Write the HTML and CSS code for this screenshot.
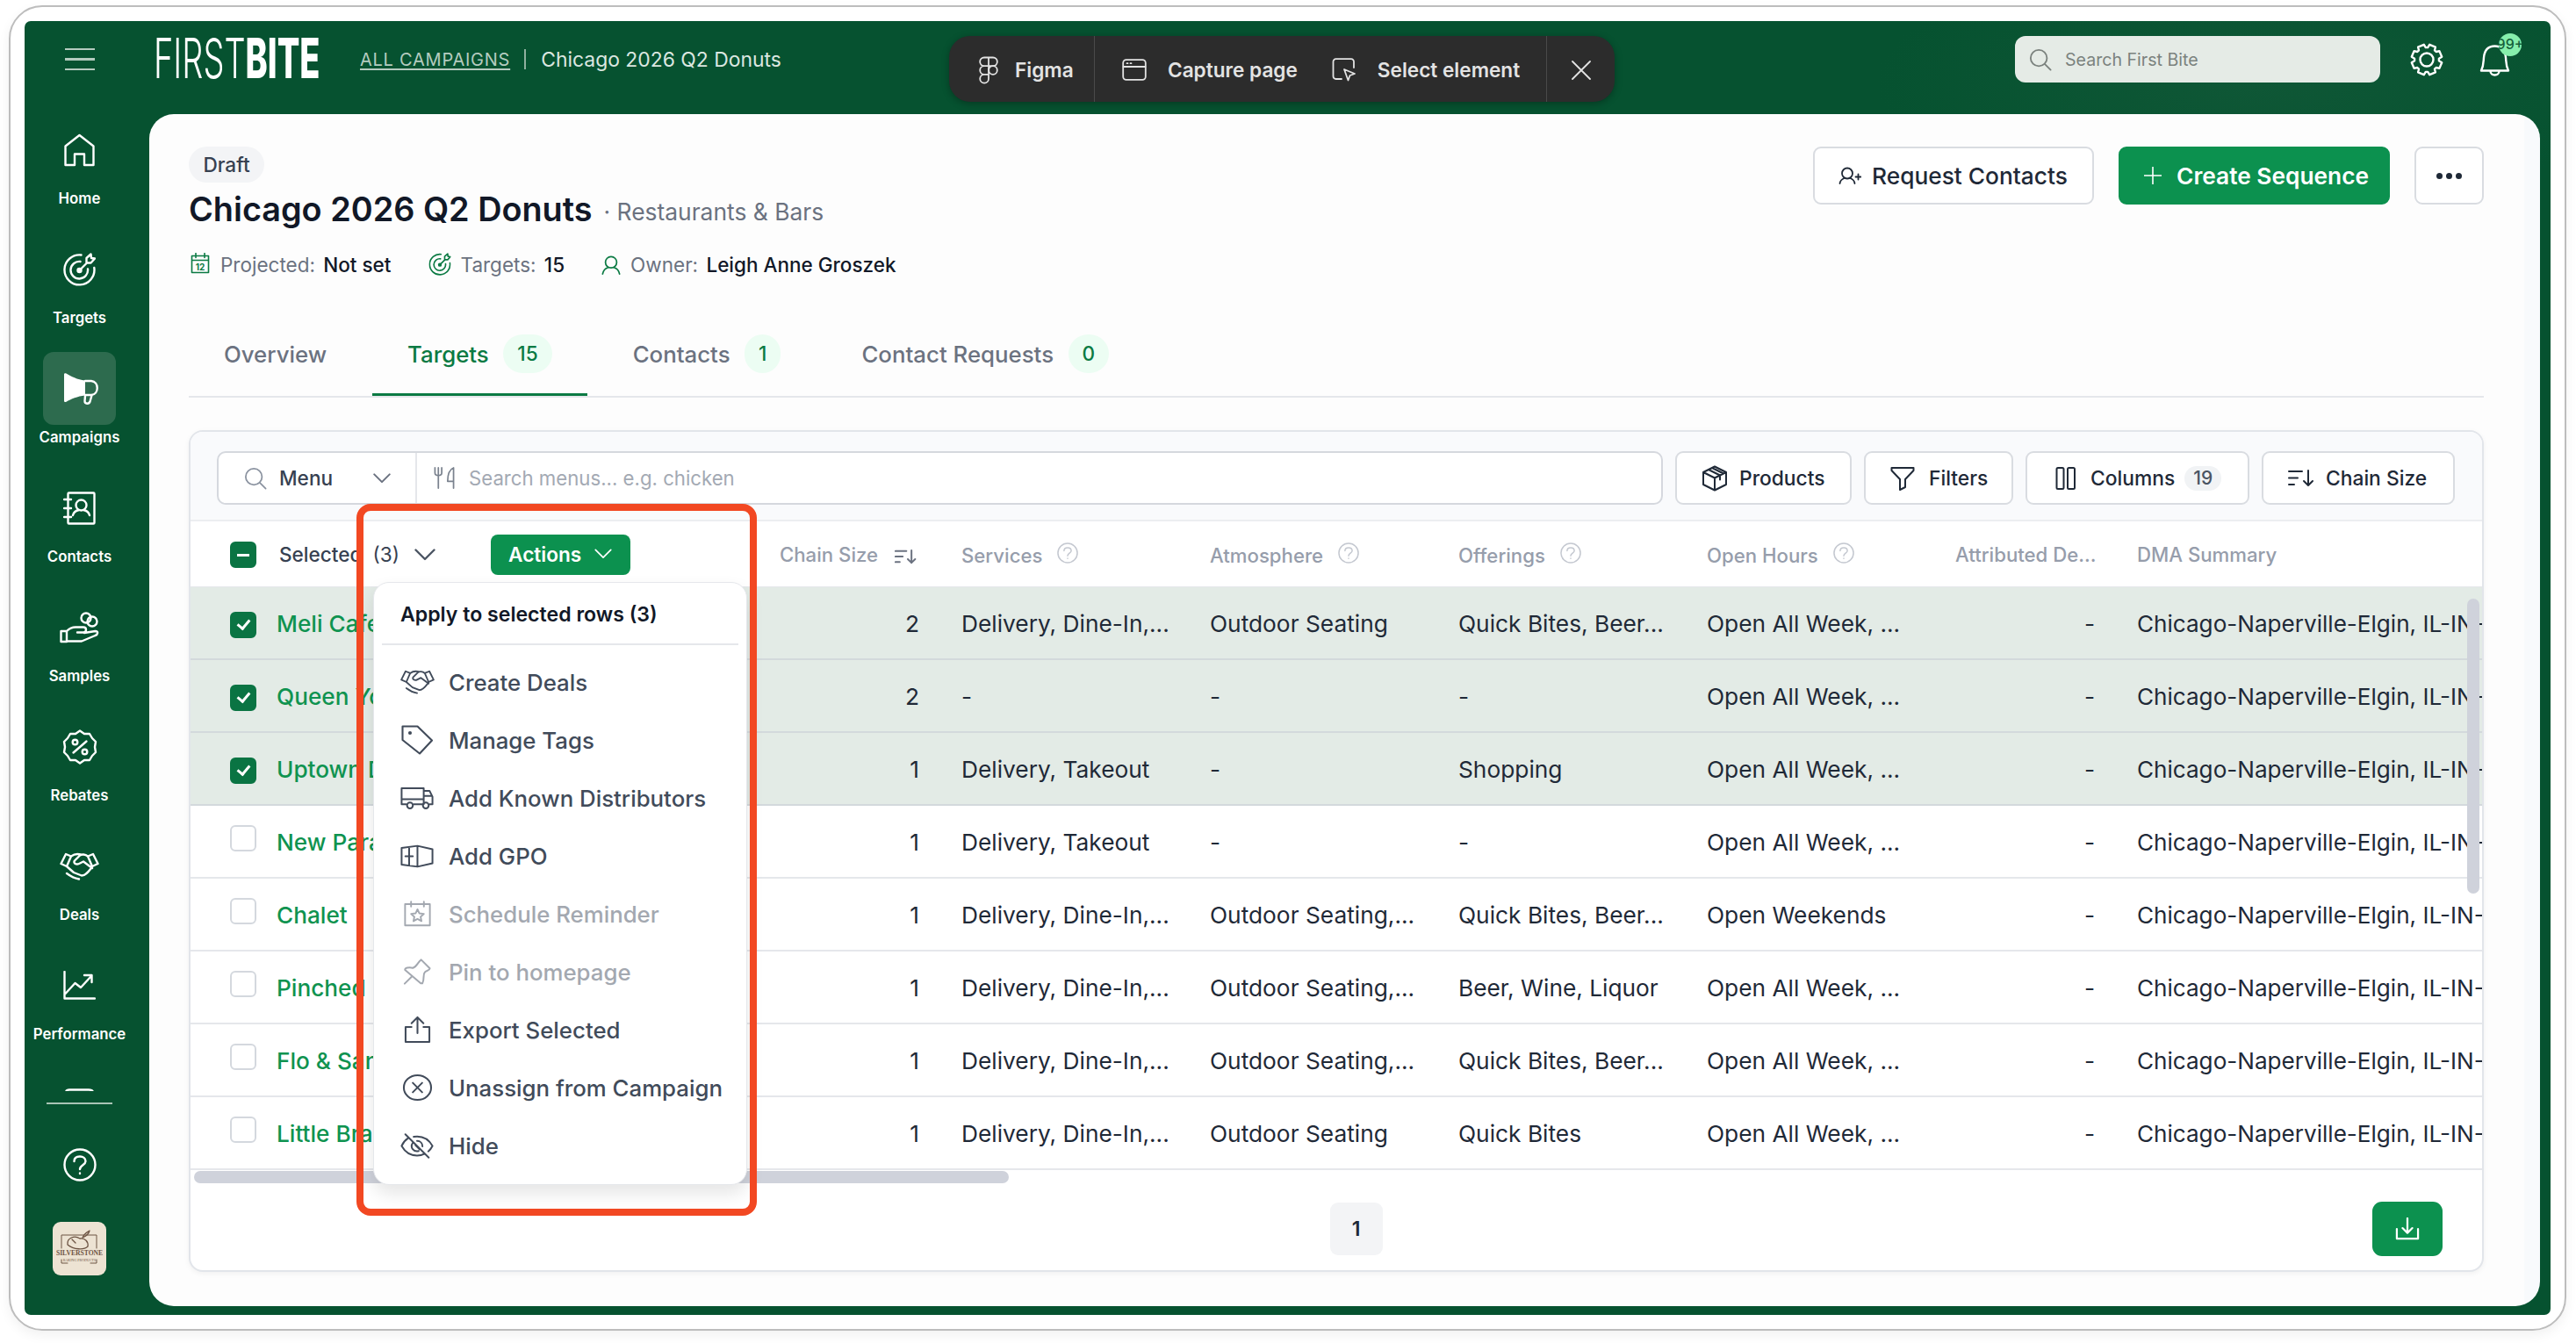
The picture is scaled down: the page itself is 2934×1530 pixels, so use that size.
FILE: index.html
```html
<!DOCTYPE html>
<html lang="en">
<head>
    <meta charset="UTF-8">
    <meta name="viewport" content="width=device-width, initial-scale=1.0">
    <title>Chicago 2026 Q2 Donuts - First Bite</title>
    <link rel="stylesheet" href="styles.css">
</head>
<body>
    <!-- Icon sprite -->
    <svg class="sprite" aria-hidden="true">
        <symbol id="i-home" viewBox="0 0 37 38"><path d="M2.5 14.5 18.5 2l16 12.5V36H24V23.500H13V36H2.500z"/></symbol>
        <symbol id="i-target" viewBox="0 0 37 38"><path d="M20.500 2.500A17 17 0 1 0 35.300 17M19.500 10A9.800 9.800 0 1 0 28 18.500M18.500 20l8.500-8.500M26.500 11.500V6l5-4.500.5 4.500 4 .5-4.500 5z"/><circle cx="18.500" cy="20" r="2" fill="currentColor"/></symbol>
        <symbol id="i-megaphone" viewBox="0 0 41 38"><path d="M1 2.500C1 1.200 2.300.8 3.500 1.400 9 4.500 16 8.500 25 9.500v17C16 27.500 9 30.500 3.500 33.800 2.300 34.500 1 34 1 32.500z" fill="currentColor" stroke="none"/><path d="M25 10h7c9 1 9 15 0 16h-7M25 27l-.5 6c0 3.500 5 3.500 6 .5l2-7"/></symbol>
        <symbol id="i-contacts" viewBox="0 0 37 38"><rect x="5.500" y="1.500" width="30" height="35" rx="1"/><path d="M1 9h8M1 19h8M1 29h8M11 27c1-4 4-5.500 7-6M30 27c-1-4-4-5.500-7-6"/><circle cx="20.500" cy="15.500" r="6"/></symbol>
        <symbol id="i-samples" viewBox="0 0 45 36"><circle cx="30" cy="7" r="5.500"/><circle cx="37" cy="11" r="5.500"/><path d="M1.500 22H8v12H1.500zM8 22c3-3 6-4.500 10-4.500h9c4 0 4 6 0 6h-7M28 24l12.500-2c4 0 3 4 0 5L25 33.500H8"/></symbol>
        <symbol id="i-rebates" viewBox="0 0 40 40"><path d="M20 1.500 25 5l6 0 3 5 4 4-1 6 1 6-4 4-3 5-6 0-5 3.500-5-3.500-6 0-3-5-4-4 1-6-1-6 4-4 3-5 6 0zM12.500 26.500l15-13"/><circle cx="14.500" cy="14.500" r="2.800"/><circle cx="25.500" cy="25.500" r="2.800"/></symbol>
        <symbol id="i-handshake" viewBox="0 0 45 32"><path d="M1.500 13 7 2l6 2.500L8 16zM43.500 13 38 2l-6 2.500L37 16zM13 4.500C17 1.500 20 1.500 24 2.500M32 4.500C29 2 25 2 23 3.500l-6 6c-2 3 2 5 5 3.500l5-2.500L37 18M8 16l8 7 9 3.500c5 0 8-5 12-10M8 24c4 3 8 5.500 14 6.500"/></symbol>
        <symbol id="i-chart" viewBox="0 0 37 34"><path d="M1.500 1v30.500H36M2.500 26l11-12 6.500 5L32 6M24 5h8.500v8"/></symbol>
        <symbol id="i-box" viewBox="0 0 37 38"><path d="M3 36V5c0-2.500 2-3.500 4-3.500h22c3 0 5 1 5 3.500v31z"/></symbol>
        <symbol id="i-help" viewBox="0 0 38 38"><circle cx="19" cy="19" r="17.500"/><path d="M12.500 15c0-4 3-5.500 6.500-5.500s6.500 2 6.500 5.500c0 4-6.500 4.500-6.500 9M19 28.500v.5"/></symbol>
        <symbol id="i-search" viewBox="0 0 28 28"><circle cx="12" cy="12" r="10"/><path d="m19.500 19.500 7 7"/></symbol>
        <symbol id="i-gear" viewBox="0 0 38 38"><path d="M32.900 20.200 36.200 22.200 33.400 28.900 29.700 28 28 29.700 28.900 33.400 22.200 36.200 20.200 32.900 17.800 32.900 15.800 36.200 9.100 33.400 10 29.700 8.300 28 4.600 28.900 1.800 22.200 5.100 20.200 5.100 17.800 1.800 15.800 4.600 9.100 8.300 10 10 8.300 9.100 4.600 15.800 1.800 17.800 5.100 20.200 5.100 22.200 1.800 28.900 4.600 28 8.300 29.700 10 33.400 9.100 36.200 15.800 32.900 17.800z"/><circle cx="19" cy="19" r="7.500"/></symbol>
        <symbol id="i-bell" viewBox="0 0 36 38"><path d="M2 31.500c3-6 2.500-10 3-15C5.800 8 10.500 3.500 17.500 3.500S29.200 8 30 16.500c.5 5 0 9 3 15zM12.500 32c0 6 10 6 10 0"/></symbol>
        <symbol id="i-chevron" viewBox="0 0 24 14"><path d="m1.500 1.500 10.500 10.500 10.500-10.500"/></symbol>
        <symbol id="i-cutlery" viewBox="0 0 26 26"><path d="M2 1v6c0 4 8 4 8 0V1M6 1v24M24 25V1c-5 2-7 9-7 16h7"/></symbol>
        <symbol id="i-cube" viewBox="0 0 30 30"><path d="M15 1.500 28 8v14l-13 6.500L2 22V8zM2 8l13 6.500L28 8M15 14.500v14M8 5l13 6.500v5M12 3l13 6.500"/></symbol>
        <symbol id="i-funnel" viewBox="0 0 28 28"><path d="M1.500 2h25v3L17 15v9l-6 3V15L1.500 5z"/></symbol>
        <symbol id="i-columns" viewBox="0 0 24 28"><rect x="1.500" y="2" width="8" height="24" rx="1.500"/><rect x="14" y="2" width="8" height="24" rx="1.500"/></symbol>
        <symbol id="i-sort" viewBox="0 0 30 20"><path d="M1 2h15M1 9.500h10M1 17h6M23 1v17M18 13l5 5 5-5"/></symbol>
        <symbol id="i-calendar" viewBox="0 0 22 24"><path d="M1.500 3.500h19v19h-19zM1.500 8.500h19M6 .5v5M16 .5v5"/></symbol>
        <symbol id="i-user" viewBox="0 0 24 24"><circle cx="12" cy="8.500" r="7"/><path d="M1.500 23c1-5 3.500-7 7-8M22.500 23c-1-5-3.500-7-7-8"/></symbol>
        <symbol id="i-user-plus" viewBox="0 0 26 20"><circle cx="10" cy="7.500" r="6"/><path d="M1.500 19c.5-3.500 2.500-5 5-6M18.500 19c-.5-3.500-2.500-5-5-6M22.500 8.500v6M19.500 11.500h6"/></symbol>
        <symbol id="i-plus" viewBox="0 0 20 20"><path d="M10 .5v19M.5 10h19"/></symbol>
        <symbol id="i-tag" viewBox="0 0 36 34"><path d="M1.500 1.500h17L35 17.500 21 32.500 1.500 17z"/><circle cx="10" cy="9" r="1"/></symbol>
        <symbol id="i-truck" viewBox="0 0 40 28"><path d="M7 21H1.500V2H28v19H16M28 5h7l3.500 7v9H35M28 21h-2M1.500 15H28M28 11h10"/><circle cx="11.500" cy="22.500" r="3.500"/><circle cx="30.500" cy="22.500" r="3.500"/></symbol>
        <symbol id="i-gpo" viewBox="0 0 40 28"><path d="M1.500 4 20.500 1.500 38.500 5.500v17L20.500 26.500 1.500 24zM20.500 1.500v25M10.500 3v22M6 14h9"/></symbol>
        <symbol id="i-reminder" viewBox="0 0 34 32"><path d="M1.500 4h31v26.500h-31zM9 1v6M25 1v6M17 10.500l2.400 5 5.600.6-4.100 3.700 1.100 5.400-5-2.700-5 2.700 1.100-5.400L9 16.100l5.600-.6z"/></symbol>
        <symbol id="i-pin" viewBox="0 0 34 32"><path d="M22 1.500 32.500 12c0 2-3 2.500-6 4.500-3 3 0 8-3 13.500h-2L2.500 14c-1-2.500 5-4 9.500-2.500C17 10 18 4 22 1.500zM11 21.500l-9 9"/></symbol>
        <symbol id="i-export" viewBox="0 0 32 32"><path d="M9 13H2v17.500h28V13h-7M16 20V2M9 8.500 16 1.500l7 7"/></symbol>
        <symbol id="i-unassign" viewBox="0 0 36 32"><ellipse cx="18" cy="16" rx="16" ry="14.500"/><path d="m12.500 10.500 11 11M23.500 10.500l-11 11"/></symbol>
        <symbol id="i-hide" viewBox="0 0 40 30"><path d="M9 6C6 8 3 11.500 1.500 15 6 23 12 26.500 20 26.500c3 0 6-.5 8.500-2M16 4c10-1.500 18 3 22.500 11-1.500 3-3 5-5 6.500M6 1l28 28M15 11c-4 6 1 11.500 7 10M20 9c4 0 6.500 3 6.500 6.500M18 14l5 5"/></symbol>
        <symbol id="i-download" viewBox="0 0 30 28"><path d="M2 14v12h26V14M15 1v17M9 13l6 6 6-6"/></symbol>
        <symbol id="i-figma" viewBox="0 0 22 32"><path d="M11 1.500H6a4.800 4.800 0 0 0 0 9.700h5zM11 1.500h5a4.800 4.800 0 0 1 0 9.700h-5zM11 11.200H6a4.800 4.800 0 0 0 0 9.600h5zM11 20.800H6a4.900 4.900 0 1 0 5 4.900z"/><circle cx="16" cy="16" r="4.800"/></symbol>
        <symbol id="i-window" viewBox="0 0 28 25"><rect x="1.200" y="1.200" width="25.600" height="22.600" rx="3.500"/><path d="M1.500 9h25M5.500 5.200h1M9.500 5.200h1"/></symbol>
        <symbol id="i-select" viewBox="0 0 28 27"><path d="M11 24H4.500a3 3 0 0 1-3-3V4.200a3 3 0 0 1 3-3H22a3 3 0 0 1 3 3V11M14 13l12 5-5.500 2-2 5.500z"/></symbol>
        <symbol id="i-close" viewBox="0 0 22 22"><path d="m1 1 20 20M21 1 1 21"/></symbol>
    </svg>

    <div class="frame">
        <div class="app">
            <header class="topbar">
                <div class="hamburger"><span></span><span></span><span></span></div>
                <div class="logo"><span class="logo-text">FIRST<b>BITE</b></span></div>
                <nav class="crumbs">
                    <a>ALL CAMPAIGNS</a>
                    <i></i>
                    <span>Chicago 2026 Q2 Donuts</span>
                </nav>
                <div class="top-search"><svg><use href="#i-search"/></svg>Search First Bite</div>
                <svg class="gear"><use href="#i-gear"/></svg>
                <div class="bell">
                    <svg><use href="#i-bell"/></svg>
                    <span class="bell-badge">99+</span>
                </div>
                <div class="capture-bar">
                    <div class="capture-brand"><svg><use href="#i-figma"/></svg>Figma</div>
                    <div class="capture-tools">
                        <svg><use href="#i-window"/></svg><span class="capture-page">Capture page</span>
                        <svg><use href="#i-select"/></svg><span>Select element</span>
                    </div>
                    <div class="capture-close"><svg><use href="#i-close"/></svg></div>
                </div>
            </header>

            <aside class="sidebar">
                <nav class="nav">
                    <a class="nav-item"><span class="nav-icon"><svg width="37" height="38"><use href="#i-home"/></svg></span>Home</a>
                    <a class="nav-item"><span class="nav-icon"><svg width="37" height="38"><use href="#i-target"/></svg></span>Targets</a>
                    <a class="nav-item active"><span class="nav-icon"><svg width="41" height="38"><use href="#i-megaphone"/></svg></span>Campaigns</a>
                    <a class="nav-item"><span class="nav-icon"><svg width="37" height="38"><use href="#i-contacts"/></svg></span>Contacts</a>
                    <a class="nav-item"><span class="nav-icon"><svg width="45" height="36"><use href="#i-samples"/></svg></span>Samples</a>
                    <a class="nav-item"><span class="nav-icon"><svg width="40" height="40"><use href="#i-rebates"/></svg></span>Rebates</a>
                    <a class="nav-item"><span class="nav-icon"><svg width="45" height="32"><use href="#i-handshake"/></svg></span>Deals</a>
                    <a class="nav-item"><span class="nav-icon"><svg width="37" height="34"><use href="#i-chart"/></svg></span>Performance</a>
                    <a class="nav-item"><span class="nav-icon"><svg width="37" height="38"><use href="#i-box"/></svg></span></a>
                </nav>
                <hr>
                <svg class="nav-help"><use href="#i-help"/></svg>
                <div class="company">
                    <svg viewBox="0 0 61 61">
                        <path d="M10 30V15h40v15M10 43v4h7M50 43v4h-7" stroke-width="1"/>
                        <path d="M17 26c-1-8 8-11 14-7 6-1 10 4 9 9-4 4-16 4-23-2zM22 20l4 4M34 18c2-5 5-6 8-8-1 4-3 6-8 8" stroke-width="1.300"/>
                    </svg>
                    <span class="company-name">SILVERSTONE</span>
                    <span class="company-sub">BAKING PRODUCTS</span>
                </div>
            </aside>

            <main class="panel">
                <div class="page-head">
                    <div>
                        <span class="pill">Draft</span>
                        <h1>Chicago 2026 Q2 Donuts<small>· Restaurants &amp; Bars</small></h1>
                        <div class="meta">
                            <svg class="calendar" viewBox="0 0 22 24"><use href="#i-calendar"/><text x="11" y="19.500">12</text></svg><span>Projected: <b>Not set</b></span>
                            <svg class="goal" viewBox="0 0 37 38"><use href="#i-target"/></svg><span>Targets: <b>15</b></span>
                            <svg class="owner" viewBox="0 0 24 24"><use href="#i-user"/></svg><span>Owner: <b>Leigh Anne Groszek</b></span>
                        </div>
                    </div>
                    <div class="head-actions">
                        <button class="btn request"><svg><use href="#i-user-plus"/></svg>Request Contacts</button>
                        <button class="btn create"><svg><use href="#i-plus"/></svg>Create Sequence</button>
                        <button class="btn more"><i></i><i></i><i></i></button>
                    </div>
                </div>

                <div class="tabs">
                    <a>Overview</a>
                    <a class="active">Targets <span>15</span></a>
                    <a>Contacts <span>1</span></a>
                    <a>Contact Requests <span>0</span></a>
                </div>

                <section class="card">
                    <div class="toolbar">
                        <div class="menu-search">
                            <div class="scope"><svg class="lens"><use href="#i-search"/></svg>Menu<svg class="chev"><use href="#i-chevron"/></svg></div>
                            <div class="query"><svg><use href="#i-cutlery"/></svg>Search menus... e.g. chicken</div>
                        </div>
                        <button class="tool products"><svg width="30" height="30"><use href="#i-cube"/></svg>Products</button>
                        <button class="tool filters"><svg width="28" height="28"><use href="#i-funnel"/></svg>Filters</button>
                        <button class="tool columns"><svg width="24" height="28"><use href="#i-columns"/></svg>Columns<span>19</span></button>
                        <button class="tool sort"><svg width="30" height="20"><use href="#i-sort"/></svg>Chain Size</button>
                    </div>

                    <div class="table-wrap">
                        <table>
                            <colgroup>
                                <col class="c-name"><col class="c-size"><col class="c-text"><col class="c-text"><col class="c-text"><col class="c-text"><col class="c-deals"><col class="c-dma">
                            </colgroup>
                            <thead>
                                <tr>
                                    <th>
                                        <div class="select-head">
                                            <span class="check some"></span>
                                            <b>Selected</b><span class="count">(3)</span>
                                            <svg><use href="#i-chevron"/></svg>
                                            <button class="actions-btn">Actions<svg><use href="#i-chevron"/></svg></button>
                                        </div>
                                    </th>
                                    <th>Chain Size<svg class="sort-icon"><use href="#i-sort"/></svg></th>
                                    <th>Services<svg class="hint" viewBox="0 0 38 38"><use href="#i-help"/></svg></th>
                                    <th>Atmosphere<svg class="hint" viewBox="0 0 38 38"><use href="#i-help"/></svg></th>
                                    <th>Offerings<svg class="hint" viewBox="0 0 38 38"><use href="#i-help"/></svg></th>
                                    <th>Open Hours<svg class="hint" viewBox="0 0 38 38"><use href="#i-help"/></svg></th>
                                    <th class="num">Attributed De...</th>
                                    <th>DMA Summary</th>
                                </tr>
                            </thead>
                            <tbody>
                                <tr class="selected"><td><span class="check on"></span><a>Meli Cafe</a></td><td class="num">2</td><td>Delivery, Dine-In,...</td><td>Outdoor Seating</td><td>Quick Bites, Beer...</td><td>Open All Week, ...</td><td class="num">-</td><td>Chicago-Naperville-Elgin, IL-IN-</td></tr>
                                <tr class="selected"><td><span class="check on"></span><a>Queen Yo</a></td><td class="num">2</td><td>-</td><td>-</td><td>-</td><td>Open All Week, ...</td><td class="num">-</td><td>Chicago-Naperville-Elgin, IL-IN-</td></tr>
                                <tr class="selected"><td><span class="check on"></span><a>Uptown D</a></td><td class="num">1</td><td>Delivery, Takeout</td><td>-</td><td>Shopping</td><td>Open All Week, ...</td><td class="num">-</td><td>Chicago-Naperville-Elgin, IL-IN-</td></tr>
                                <tr><td><span class="check"></span><a>New Para</a></td><td class="num">1</td><td>Delivery, Takeout</td><td>-</td><td>-</td><td>Open All Week, ...</td><td class="num">-</td><td>Chicago-Naperville-Elgin, IL-IN-</td></tr>
                                <tr><td><span class="check"></span><a>Chalet</a></td><td class="num">1</td><td>Delivery, Dine-In,...</td><td>Outdoor Seating,...</td><td>Quick Bites, Beer...</td><td>Open Weekends</td><td class="num">-</td><td>Chicago-Naperville-Elgin, IL-IN-</td></tr>
                                <tr><td><span class="check"></span><a>Pinched</a></td><td class="num">1</td><td>Delivery, Dine-In,...</td><td>Outdoor Seating,...</td><td>Beer, Wine, Liquor</td><td>Open All Week, ...</td><td class="num">-</td><td>Chicago-Naperville-Elgin, IL-IN-</td></tr>
                                <tr><td><span class="check"></span><a>Flo &amp; San</a></td><td class="num">1</td><td>Delivery, Dine-In,...</td><td>Outdoor Seating,...</td><td>Quick Bites, Beer...</td><td>Open All Week, ...</td><td class="num">-</td><td>Chicago-Naperville-Elgin, IL-IN-</td></tr>
                                <tr><td><span class="check"></span><a>Little Bra</a></td><td class="num">1</td><td>Delivery, Dine-In,...</td><td>Outdoor Seating</td><td>Quick Bites</td><td>Open All Week, ...</td><td class="num">-</td><td>Chicago-Naperville-Elgin, IL-IN-</td></tr>
                            </tbody>
                        </table>
                        <div class="v-scroll"></div>
                    </div>
                    <div class="h-scroll"></div>

                    <div class="card-foot">
                        <span class="page">1</span>
                        <button class="download"><svg><use href="#i-download"/></svg></button>
                    </div>

                    <!-- Bulk actions menu -->
                    <div class="menu">
                        <h2>Apply to selected rows (3)</h2>
                        <ul>
                            <li><span><svg width="43" height="28"><use href="#i-handshake"/></svg></span>Create Deals</li>
                            <li><span><svg width="36" height="34"><use href="#i-tag"/></svg></span>Manage Tags</li>
                            <li><span><svg width="38" height="27"><use href="#i-truck"/></svg></span>Add Known Distributors</li>
                            <li><span><svg width="38" height="27"><use href="#i-gpo"/></svg></span>Add GPO</li>
                            <li class="disabled"><span><svg width="31" height="32"><use href="#i-reminder"/></svg></span>Schedule Reminder</li>
                            <li class="disabled"><span><svg width="32" height="32"><use href="#i-pin"/></svg></span>Pin to homepage</li>
                            <li><span><svg width="31" height="32"><use href="#i-export"/></svg></span>Export Selected</li>
                            <li><span><svg width="35" height="32"><use href="#i-unassign"/></svg></span>Unassign from Campaign</li>
                            <li><span><svg width="38" height="29"><use href="#i-hide"/></svg></span>Hide</li>
                        </ul>
                    </div>
                    <div class="callout"></div>
                </section>
            </main>
        </div>
    </div>
</body>
</html>
```
FILE: styles.css
```css
* {
    box-sizing: border-box;
}
body {
    margin: 0;
    height: 1530px;
    overflow: hidden;
    background: #fff;
    font-family: Inter, "Liberation Sans", sans-serif;
    color: #1f2937;
}
button {
    font-family: inherit;
}
svg {
    fill: none;
    stroke: currentColor;
    stroke-width: 2.4;
    stroke-linecap: round;
    stroke-linejoin: round;
    flex: none;
}
.sprite {
    display: none;
}
.frame {
    margin: 6px 11px 0 10px;
    height: 1510px;
    padding: 16px;
    border: 2px solid #bdbdbd;
    border-radius: 38px;
    box-shadow: 0 5px 14px rgba(0, 0, 0, 0.06);
}
.app {
    display: grid;
    grid-template-columns: 142px 1fr;
    grid-template-rows: 106px 1358px;
    height: 1474px;
    padding-right: 12px;
    background: radial-gradient(ellipse 430px 150px at 2540px 70px, #0f5736, #065230);
    border-radius: 7px;
}

/* Top bar */
.topbar {
    grid-column: 1 / 3;
    position: relative;
    display: flex;
    align-items: center;
    padding-bottom: 19px;
    color: #fff;
}
.hamburger {
    display: flex;
    flex-direction: column;
    gap: 9px;
    width: 34px;
    margin-left: 46px;
}
.hamburger span {
    height: 2.5px;
    background: #b4cbbf;
}
.logo {
    width: 188px;
    margin: -4px 0 0 67px;
}
.logo-text {
    display: block;
    font-size: 63px;
    line-height: 64px;
    font-weight: 300;
    white-space: nowrap;
    transform: scaleX(0.603);
    transform-origin: left;
}
.logo-text b {
    font-weight: 800;
}
.crumbs {
    display: flex;
    align-items: center;
    margin-left: 47px;
    font-size: 22.9px;
    color: #dbe7e0;
}
.crumbs a {
    font-size: 20px;
    letter-spacing: 0.75px;
    color: #b4cbbf;
    text-decoration: underline;
    text-decoration-thickness: 2px;
    text-underline-offset: 3px;
}
.crumbs i {
    width: 2px;
    height: 23px;
    margin: 0 17px 0 16px;
    background: #8fb09f;
}
.top-search {
    display: flex;
    align-items: center;
    gap: 15px;
    width: 416px;
    height: 53px;
    margin-left: auto;
    padding-left: 16px;
    background: #e5ebe6;
    border-radius: 12px;
    font-size: 19.6px;
    color: #7b827e;
}
.top-search svg {
    width: 26px;
    height: 26px;
    stroke-width: 2;
}
.gear {
    width: 38px;
    height: 38px;
    margin-left: 34px;
}
.bell {
    position: relative;
    width: 36px;
    height: 38px;
    margin: 0 33px 0 41px;
}
.bell svg {
    width: 36px;
    height: 38px;
}
.bell-badge {
    position: absolute;
    left: 22px;
    top: -11px;
    width: 26px;
    height: 26px;
    border-radius: 50%;
    background: #86efac;
    color: #14603a;
    font-size: 16px;
    font-weight: 500;
    line-height: 25px;
    display: flex;
    justify-content: center;
    overflow: hidden;
}
.capture-bar {
    position: absolute;
    left: 1053px;
    top: 17px;
    display: flex;
    width: 758px;
    height: 75px;
    background: #2c2c2c;
    border-radius: 24px;
    box-shadow: 0 2px 8px rgba(0, 0, 0, 0.3);
    font-size: 22.6px;
    font-weight: 600;
    color: #e3e3e3;
}
.capture-bar > div {
    display: flex;
    align-items: center;
    padding-top: 2px;
}
.capture-bar svg {
    stroke-width: 1.8;
}
.capture-brand {
    width: 166px;
    padding-left: 34px;
    gap: 19px;
    border-right: 1px solid #4a4a4a;
}
.capture-brand svg {
    width: 22px;
    height: 32px;
}
.capture-tools {
    width: 515px;
    padding-left: 31px;
    gap: 24px;
    border-right: 1px solid #4a4a4a;
}
.capture-tools svg {
    width: 28px;
    height: 27px;
}
.capture-page {
    margin-right: 15px;
}
.capture-close {
    padding-left: 28px;
}
.capture-close svg {
    width: 22px;
    height: 22px;
}

/* Sidebar */
.sidebar {
    display: flex;
    flex-direction: column;
    align-items: center;
    width: 125px;
    color: #fff;
}
.nav {
    width: 125px;
    height: 1114px;
    margin-top: -1px;
    overflow: hidden;
}
.nav-item {
    display: flex;
    flex-direction: column;
    align-items: center;
    height: 136px;
    font-size: 16.8px;
    font-weight: 600;
    line-height: 28px;
}
.nav-icon {
    display: flex;
    align-items: center;
    justify-content: center;
    width: 83px;
    height: 83px;
    border-radius: 12px;
}
.nav-item.active .nav-icon {
    padding-left: 4px;
    background: #2d6b4e;
}
.sidebar hr {
    width: 75px;
    height: 2px;
    margin: 13px 0 50px;
    border: none;
    background: #a9c4b5;
}
.nav-help {
    width: 38px;
    height: 38px;
}
.company {
    position: relative;
    width: 61px;
    height: 61px;
    margin-top: 46px;
    border-radius: 9px;
    background: #ede3d3;
    color: #6d5443;
    font-family: "Liberation Serif", serif;
    text-align: center;
    overflow: hidden;
}
.company svg {
    position: absolute;
    left: 0;
    top: 0;
    width: 61px;
    height: 61px;
}
.company-name {
    position: absolute;
    left: 0;
    right: 0;
    top: 32px;
    font-size: 7.6px;
    line-height: 8px;
    font-weight: bold;
}
.company-sub {
    position: absolute;
    left: 0;
    right: 0;
    top: 41px;
    font-size: 4px;
    line-height: 5px;
}

/* Page */
.panel {
    min-width: 0;
    padding: 37px 64px 0 45px;
    background: linear-gradient(to left, #f8fafc 18px, #fdfdfd 18px);
    border-radius: 28px;
}
.page-head {
    display: flex;
    justify-content: space-between;
    height: 150px;
}
.pill {
    display: block;
    width: 86px;
    height: 41px;
    border-radius: 21px;
    background: #f3f4f6;
    color: #374151;
    font-size: 22.6px;
    font-weight: 500;
    line-height: 41px;
    text-align: center;
}
h1 {
    height: 50px;
    margin: 5px 0 0;
    font-size: 37.8px;
    font-weight: 600;
    line-height: 50px;
    color: #111827;
}
h1 small {
    margin-left: 13px;
    font-size: 26.4px;
    font-weight: 400;
    line-height: 30px;
    vertical-align: 1.5px;
    color: #6b7280;
}
.meta {
    display: flex;
    align-items: center;
    margin-top: 24px;
    font-size: 22.5px;
    line-height: 30px;
    color: #6b7280;
}
.meta b {
    margin-left: 3px;
    font-weight: 500;
    color: #111827;
}
.meta svg {
    color: #0b7a43;
}
.meta .calendar {
    width: 22px;
    height: 24px;
    margin: -4px 12px 0 2px;
    stroke-width: 1.6;
}
.calendar text {
    font-size: 10px;
    font-weight: 700;
    text-anchor: middle;
    fill: currentColor;
    stroke: none;
}
.meta .goal {
    width: 26px;
    height: 26px;
    margin: -3px 11px 0 42px;
}
.meta .owner {
    width: 22px;
    height: 22px;
    margin: 0 11px 0 42px;
    stroke-width: 1.9;
}
.head-actions {
    display: flex;
    gap: 28px;
}
.btn {
    display: flex;
    align-items: center;
    height: 66px;
    padding: 0;
    border: 2px solid #d9dce1;
    border-radius: 9px;
    background: #fff;
    color: #1f2937;
    font-size: 26.3px;
    font-weight: 500;
}
.request {
    width: 320px;
    padding-left: 27px;
    gap: 12px;
}
.request svg {
    width: 26px;
    height: 20px;
    stroke-width: 1.8;
}
.create {
    width: 309px;
    padding-left: 27px;
    gap: 17px;
    border-color: #0c914f;
    background: #0c914f;
    color: #fff;
    font-weight: 600;
}
.create svg {
    width: 20px;
    height: 20px;
    stroke-width: 1.6;
}
.more {
    width: 79px;
    justify-content: center;
    gap: 4px;
}
.more i {
    width: 7px;
    height: 7px;
    border-radius: 50%;
    background: #1f2937;
}

/* Tabs */
.tabs {
    display: flex;
    gap: 12px;
    margin-top: 41px;
    border-bottom: 2px solid #e5e7eb;
}
.tabs a {
    display: flex;
    align-items: center;
    gap: 16.5px;
    height: 93px;
    padding: 0 40px;
    border-bottom: 3px solid transparent;
    font-size: 25.8px;
    font-weight: 500;
    color: #6b7280;
}
.tabs a.active {
    border-color: #0b7a43;
    color: #0b7a43;
}
.tabs span {
    padding: 0 16px;
    border-radius: 22px;
    background: #ecfdf3;
    color: #0b7a43;
    font-size: 22.6px;
    line-height: 44px;
}

/* Card */
.card {
    position: relative;
    height: 959px;
    margin-top: 37px;
    border: 2px solid #e2e5ea;
    border-radius: 16px;
    background: #fff;
    box-shadow: 0 2px 6px rgba(0, 0, 0, 0.05);
}
.toolbar {
    display: flex;
    gap: 14px;
    height: 102px;
    padding: 22px 31px 0 30px;
    border-bottom: 2px solid #eceef1;
    border-radius: 14px 14px 0 0;
    background: #f9fafc;
}
.menu-search {
    flex: 1;
    display: flex;
    height: 61px;
    border: 2px solid #d5d8de;
    border-radius: 10px;
    background: #fff;
    font-size: 22.6px;
}
.scope {
    display: flex;
    align-items: center;
    width: 226px;
    padding-left: 29px;
    border-right: 2px solid #e5e7eb;
    color: #374151;
    font-weight: 500;
}
.lens {
    width: 26px;
    height: 26px;
    margin-right: 14px;
    stroke-width: 1.9;
    color: #8b93a0;
}
.chev {
    width: 20px;
    height: 12px;
    margin-left: 46px;
    color: #6b7280;
}
.query {
    display: flex;
    align-items: center;
    gap: 15px;
    padding-left: 18px;
    color: #a3a9b3;
    font-size: 22.2px;
}
.query svg {
    width: 26px;
    height: 25px;
    stroke-width: 1.8;
    color: #7a828e;
}
.tool {
    display: flex;
    align-items: center;
    height: 61px;
    padding: 0 0 0 28px;
    border: 2px solid #d9dce1;
    border-radius: 9px;
    background: #fff;
    color: #1f2937;
    font-size: 22.8px;
    font-weight: 500;
}
.tool svg {
    margin-right: 13px;
    stroke-width: 2;
}
.products {
    width: 201px;
}
.filters {
    width: 170px;
}
.filters svg {
    margin-right: 16px;
}
.columns {
    width: 255px;
    padding-left: 32px;
}
.columns svg {
    margin-right: 16px;
}
.columns span {
    margin-left: 11px;
    padding: 0 10px;
    border-radius: 14px;
    background: #f1f3f5;
    color: #4b5563;
    font-size: 21px;
    line-height: 28px;
}
.sort {
    width: 220px;
}

/* Table */
.table-wrap {
    position: relative;
    height: 740px;
    overflow: hidden;
}
table {
    width: 2615px;
    table-layout: fixed;
    border-collapse: separate;
    border-spacing: 0;
}
.c-name {
    width: 647px;
}
.c-size {
    width: 207px;
}
.c-text {
    width: 283px;
}
.c-deals {
    width: 207px;
}
th,
td {
    padding: 0 24px;
    text-align: left;
    white-space: nowrap;
}
th {
    height: 75px;
    padding-top: 1px;
    border-bottom: 1px solid #e5e7eb;
    font-size: 22.2px;
    font-weight: 500;
    color: #969dab;
}
td {
    height: 83px;
    padding-top: 2px;
    border-bottom: 2px solid #e5e7eb;
    font-size: 26.3px;
    line-height: 60px;
    color: #1f2937;
}
td:last-child {
    font-size: 26.1px;
}
th:first-child,
td:first-child {
    padding-left: 45px;
    overflow: hidden;
}
th.num,
td.num {
    text-align: right;
}
.selected td {
    background: #e3ebe6;
    border-color: #d3d9dc;
}
td a {
    margin-left: 23px;
    font-weight: 500;
    font-size: 26.2px;
    color: #0f9350;
}
.check {
    display: inline-block;
    width: 30px;
    height: 30px;
    border: 2px solid #d4d8de;
    border-radius: 6px;
    background: #fff;
    vertical-align: -1.5px;
    position: relative;
}
.check.on {
    vertical-align: middle;
}
.check.on,
.check.some {
    border-color: #0a7443;
    background: #0a7443;
}
.check.on::after {
    content: "";
    position: absolute;
    left: 9px;
    top: 4px;
    width: 6px;
    height: 11px;
    border: solid #fff;
    border-width: 0 3px 3px 0;
    transform: rotate(40deg);
}
.check.some::after {
    content: "";
    position: absolute;
    left: 6px;
    top: 12px;
    width: 14px;
    height: 3px;
    background: #fff;
}
.select-head {
    display: flex;
    align-items: center;
    color: #374151;
    font-size: 22.6px;
}
.select-head b {
    margin-left: 26px;
    font-weight: 500;
}
.select-head .count {
    margin-left: 12px;
    font-weight: 400;
}
.select-head > svg {
    width: 24px;
    height: 14px;
    margin-left: 17px;
    color: #4b5563;
}
.actions-btn {
    display: flex;
    align-items: center;
    width: 159px;
    height: 46px;
    margin-left: 63px;
    padding: 0 0 1px 20px;
    border: none;
    border-radius: 8px;
    background: #0c914f;
    color: #fff;
    font-size: 22.6px;
    font-weight: 600;
}
.actions-btn svg {
    width: 20px;
    height: 12px;
    margin-left: 15px;
    stroke-width: 2;
}
.sort-icon {
    width: 25px;
    height: 17px;
    margin-left: 19px;
    vertical-align: -3px;
    color: #6b7280;
}
.hint {
    width: 24px;
    height: 24px;
    margin-left: 17px;
    color: #c4c8d0;
    vertical-align: -1px;
}
.v-scroll {
    position: absolute;
    right: 3px;
    top: 88px;
    width: 14px;
    height: 336px;
    border-radius: 7px;
    background: #cfd2db;
}
.h-scroll {
    width: 928px;
    height: 14px;
    margin: 0 0 0 4px;
    border-radius: 7px;
    background: #cfd2db;
}
.card-foot {
    display: grid;
    grid-template-columns: 1fr auto 1fr;
    align-items: center;
    height: 103px;
    padding: 0 45px 0 90px;
}
.page {
    grid-column: 2;
    width: 60px;
    height: 60px;
    border-radius: 9px;
    background: #f3f4f6;
    font-size: 23px;
    font-weight: 600;
    line-height: 60px;
    text-align: center;
}
.download {
    justify-self: end;
    display: flex;
    align-items: center;
    justify-content: center;
    width: 80px;
    height: 62px;
    border: none;
    border-radius: 11px;
    background: #0c914f;
    color: #fff;
}
.download svg {
    width: 28px;
    height: 26px;
}

/* Bulk actions menu */
.menu {
    position: absolute;
    left: 208px;
    top: 171px;
    width: 426px;
    height: 687px;
    border: 1px solid #e5e7eb;
    border-radius: 18px;
    background: #fff;
    box-shadow: 0 10px 20px rgba(0, 0, 0, 0.1);
}
.menu h2 {
    margin: 0 9px 9px;
    padding: 2px 0 0 21px;
    height: 71px;
    border-bottom: 2px solid #e5e7eb;
    font-size: 23.1px;
    font-weight: 600;
    line-height: 68px;
    color: #111827;
}
.menu ul {
    margin: 0;
    padding: 0;
    list-style: none;
}
.menu li {
    display: flex;
    align-items: center;
    height: 66px;
    padding-left: 27px;
    font-size: 25.8px;
    font-weight: 500;
    color: #414b5a;
}
.menu li span {
    display: flex;
    justify-content: center;
    width: 44px;
    margin-right: 14px;
}
.menu li svg {
    stroke-width: 2.1;
}
.menu li.disabled {
    color: #a3a8b0;
}
.callout {
    position: absolute;
    left: 189px;
    top: 82px;
    width: 456px;
    height: 811px;
    border: 8px solid #f24822;
    border-radius: 16px;
}
```
